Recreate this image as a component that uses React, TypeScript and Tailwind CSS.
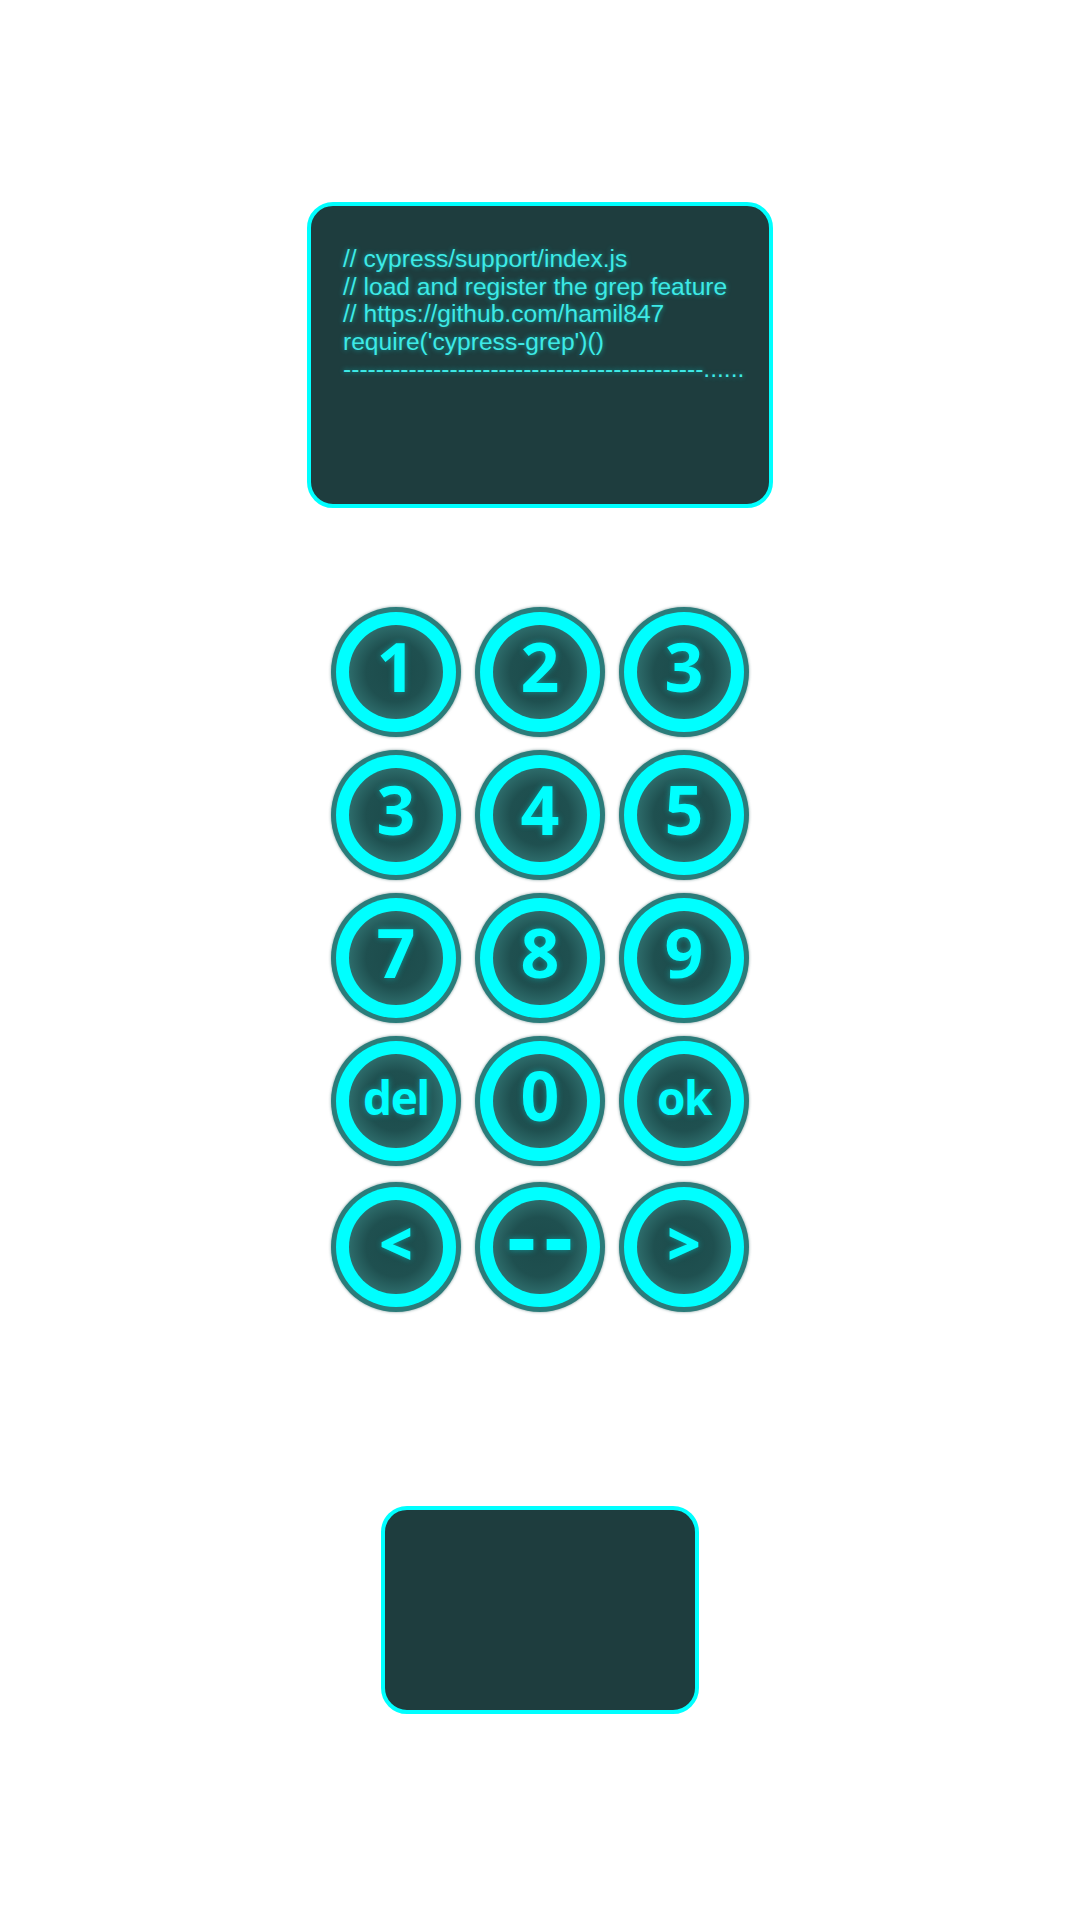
import React from "react";

const keys = ["1", "2", "3", "3", "4", "5", "7", "8", "9", "del", "0", "ok", "<", "--", ">"];

function Key({ label }: { label: string }) {
  const small = label === "del" || label === "ok";
  const dash = label === "--";
  const sym = label === "<" || label === ">";
  let cls = "text-[68px] font-bold -translate-y-[6px]";
  if (small) cls = "text-[46px] font-bold tracking-[-1.5px] -translate-y-[4px]";
  if (sym) cls = "text-[58px] font-extrabold -translate-y-[4px]";
  if (dash) cls = "text-[90px] font-bold tracking-[8px] pl-[8px] -translate-y-[13px]";
  return (
    <div className="w-[130px] h-[130px] rounded-full bg-[#2b7c7a] p-[5px] shadow-[0_0_3px_rgba(40,90,90,0.6)]">
      <div className="w-full h-full rounded-full bg-[#00ffff] p-[13px]">
        <div className="w-full h-full rounded-full bg-[radial-gradient(circle,#1c4b4b_0%,#1f5050_45%,#3d8b89_100%)] flex items-center justify-center">
          <span
            className={
              "inline-block font-['Open_Sans',sans-serif] text-[#00ffff] leading-none [text-shadow:0_0_6px_rgba(0,255,255,0.4)] " +
              cls
            }
          >
            {label}
          </span>
        </div>
      </div>
    </div>
  );
}

export default function App() {
  return (
    <div className="w-[1080px] h-[1920px] bg-white flex flex-col items-center pt-[202px]">
      <div className="w-[466px] h-[306px] rounded-[26px] border-[4px] border-[#00ffff] bg-[#1e3d3e] pt-[39px] pl-[32px]">
        <div className="font-['Liberation_Sans',Arial,sans-serif] text-[24.6px] leading-[27.5px] text-[#3eeae6] [text-shadow:0_0_5px_rgba(0,255,255,0.5)] whitespace-pre">
          <div>// cypress/support/index.js</div>
          <div>// load and register the grep feature</div>
          <div>// https://github.com/hamil847</div>
          <div>require('cypress-grep')()</div>
          <div>--------------------------------------------......</div>
        </div>
      </div>

      <div className="mt-[99px] grid grid-cols-[130px_130px_130px] gap-x-[14px] gap-y-[13px]">
        {keys.map((k, i) => (
          <div key={i} className={i >= 12 ? "mt-[3px]" : ""}>
            <Key label={k} />
          </div>
        ))}
      </div>

      <div className="mt-[194px] w-[318px] h-[208px] rounded-[26px] border-[4px] border-[#00ffff] bg-[#1e3d3e]" />
    </div>
  );
}
